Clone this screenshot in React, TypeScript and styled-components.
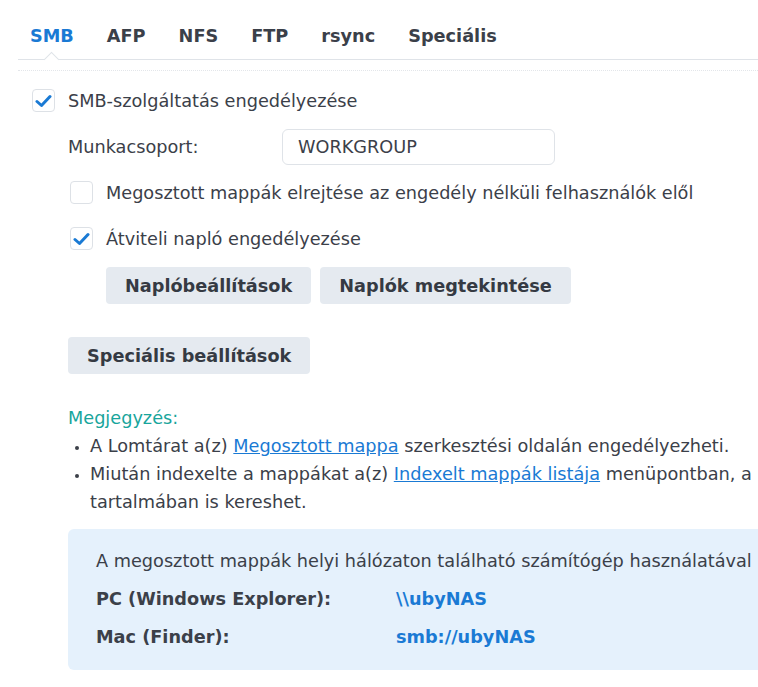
import React, { FC } from 'react';
import styled, { createGlobalStyle } from 'styled-components';

const colours = {
  text: '#3b4049',
  blue: '#1a7ad4',
  teal: '#18a59c',
  border: '#dfe3e8',
  button: '#e5eaf0',
  note: '#e5f1fc',
};

const GlobalStyle = createGlobalStyle`
  body {
    margin: 0;
    overflow: hidden;
    background: #fff;
    font-family: "DejaVu Sans", Verdana, sans-serif;
    font-size: 17.7px;
    color: ${colours.text};
  }
`;

const Page = styled.div`
  width: 900px;
  padding-left: 18px;
`;

const TabBar = styled.div`
  display: flex;
  gap: 33px;
  height: 59px;
  padding-left: 12px;
  border-bottom: 1px solid ${colours.border};
`;

const Tab = styled.div<{ $active?: boolean }>`
  position: relative;
  display: flex;
  align-items: center;
  padding-top: 12px;
  font-weight: bold;
  color: ${(p) => (p.$active ? colours.blue : colours.text)};

  ${(p) =>
    p.$active &&
    `
    &:after {
      content: '';
      position: absolute;
      left: 50%;
      bottom: -6px;
      width: 10px;
      height: 10px;
      margin-left: -6px;
      background: #fff;
      border-top: 1px solid ${colours.border};
      border-left: 1px solid ${colours.border};
      transform: rotate(45deg);
    }
  `}
`;

const Dotted = styled.div`
  margin-top: 10px;
  border-top: 1px dotted #e3e6ea;
`;

const Content = styled.div`
  padding: 18px 0 0 14px;
  display: flex;
  flex-direction: column;
`;

const CheckRow = styled.label`
  display: flex;
  align-items: center;
  gap: 13px;
  height: 23px;
`;

const Box = styled.span`
  width: 21px;
  height: 21px;
  border: 1px solid #dde1e6;
  border-radius: 4px;
  background: #fff;
  display: flex;
  align-items: center;
  justify-content: center;
`;

const Indent = styled.div`
  padding-left: 36px;
  display: flex;
  flex-direction: column;
`;

const FieldRow = styled.div`
  display: flex;
  align-items: center;
  margin-top: 17px;
`;

const FieldLabel = styled.div`
  width: 214px;
`;

const Input = styled.div`
  width: 256px;
  height: 34px;
  padding-left: 15px;
  border: 1px solid ${colours.border};
  border-radius: 6px;
  display: flex;
  align-items: center;
`;

const SubChecks = styled.div`
  padding-left: 2px;
  display: flex;
  flex-direction: column;
  gap: 23px;
  margin-top: 16px;
`;

const ButtonRow = styled.div<{ $indent?: number }>`
  display: flex;
  gap: 9px;
  padding-left: ${(p) => p.$indent || 0}px;
`;

const Button = styled.button`
  height: 37px;
  padding: 0 19px;
  border: none;
  border-radius: 4px;
  background: ${colours.button};
  color: #353a43;
  font-family: inherit;
  font-size: 17.7px;
  font-weight: bold;
`;

const NoteTitle = styled.div`
  color: ${colours.teal};
  margin-top: 30px;
  line-height: 28px;
`;

const NoteList = styled.ul`
  margin: 0;
  padding: 0 0 0 22px;
  width: 678px;
  line-height: 28px;

  li::marker {
    font-size: 14px;
  }
`;

const Link = styled.a`
  color: ${colours.blue};
  text-decoration: underline;
`;

const InfoBox = styled.div`
  margin-top: 13px;
  width: 760px;
  padding: 13px 0 14px 28px;
  background: ${colours.note};
  border-radius: 6px;
  white-space: nowrap;
`;

const InfoRow = styled.div`
  display: flex;
  height: 38px;
  align-items: center;
`;

const InfoKey = styled.div`
  width: 300px;
  font-weight: bold;
`;

const InfoValue = styled.div`
  font-weight: bold;
  color: ${colours.blue};
`;

const Check: FC<{ on?: boolean }> = ({ on }) => (
  <Box>
    {on && (
      <svg width="17" height="14" viewBox="0 0 17 14">
        <path d="M2 7.5 L6.5 11.5 L15 2.5" fill="none" stroke={colours.blue} strokeWidth="3" strokeLinecap="round" strokeLinejoin="round" />
      </svg>
    )}
  </Box>
);

const App: FC = () => (
  <Page>
    <GlobalStyle />
    <TabBar>
      <Tab $active>SMB</Tab>
      <Tab>AFP</Tab>
      <Tab>NFS</Tab>
      <Tab>FTP</Tab>
      <Tab>rsync</Tab>
      <Tab>Speciális</Tab>
    </TabBar>
    <Dotted />
    <Content>
      <CheckRow>
        <Check on />
        SMB-szolgáltatás engedélyezése
      </CheckRow>
      <Indent>
        <FieldRow>
          <FieldLabel>Munkacsoport:</FieldLabel>
          <Input>WORKGROUP</Input>
        </FieldRow>
        <SubChecks>
          <CheckRow>
            <Check />
            Megosztott mappák elrejtése az engedély nélküli felhasználók elől
          </CheckRow>
          <CheckRow>
            <Check on />
            Átviteli napló engedélyezése
          </CheckRow>
        </SubChecks>
        <ButtonRow $indent={38} style={{ marginTop: 17 }}>
          <Button>Naplóbeállítások</Button>
          <Button>Naplók megtekintése</Button>
        </ButtonRow>
        <ButtonRow style={{ marginTop: 33 }}>
          <Button>Speciális beállítások</Button>
        </ButtonRow>
        <NoteTitle>Megjegyzés:</NoteTitle>
        <NoteList>
          <li>
            A Lomtárat a(z) <Link>Megosztott mappa</Link> szerkesztési oldalán engedélyezheti.
          </li>
          <li>
            Miután indexelte a mappákat a(z) <Link>Indexelt mappák listája</Link> menüpontban, a tartalmában is kereshet.
          </li>
        </NoteList>
        <InfoBox>
          <InfoRow>A megosztott mappák helyi hálózaton található számítógép használatával</InfoRow>
          <InfoRow>
            <InfoKey>PC (Windows Explorer):</InfoKey>
            <InfoValue>\\ubyNAS</InfoValue>
          </InfoRow>
          <InfoRow>
            <InfoKey>Mac (Finder):</InfoKey>
            <InfoValue>smb://ubyNAS</InfoValue>
          </InfoRow>
        </InfoBox>
      </Indent>
    </Content>
  </Page>
);

export default App;
